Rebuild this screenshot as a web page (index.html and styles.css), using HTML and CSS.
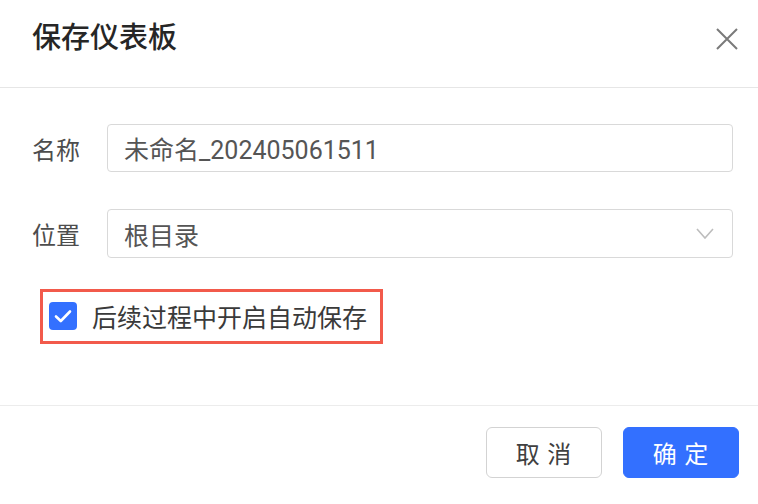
FILE: index.html
```html
<!DOCTYPE html>
<html lang="zh-CN">
<head>
<meta charset="utf-8">
<title>保存仪表板</title>
<link rel="stylesheet" href="styles.css">
</head>
<body>
<div class="dialog">
  <header class="dlg-header">
    <h1 class="dlg-title">保存仪表板</h1>
    <button class="close-btn" aria-label="关闭">
      <svg width="22" height="22" viewBox="0 0 22 22"><path d="M1 1L21 21M21 1L1 21" stroke="#7a7a7a" stroke-width="2" fill="none"/></svg>
    </button>
  </header>
  <main class="dlg-body">
    <div class="form-row">
      <label class="form-label">名称</label>
      <div class="field">未命名_202405061511</div>
    </div>
    <div class="form-row">
      <label class="form-label">位置</label>
      <div class="field select">
        <span>根目录</span>
        <svg class="chevron" width="18" height="11" viewBox="0 0 18 11"><path d="M1 1L9 10L17 1" stroke="#bdbdbd" stroke-width="1.6" fill="none"/></svg>
      </div>
    </div>
    <div class="check-wrap">
      <div class="check-row">
        <span class="checkbox">
          <svg width="18" height="14" viewBox="0 0 18 14"><path d="M2 7.5L6.8 12L16 2.5" stroke="#fff" stroke-width="2.6" fill="none" stroke-linecap="round" stroke-linejoin="round"/></svg>
        </span>
        <span class="check-text">后续过程中开启自动保存</span>
      </div>
    </div>
  </main>
  <footer class="dlg-footer">
    <button class="btn btn-default">取 消</button>
    <button class="btn btn-primary">确 定</button>
  </footer>
</div>
</body>
</html>
```
FILE: styles.css
```css
html, body {
  margin: 0;
  padding: 0;
  background: #ffffff;
}
body {
  font-family: "Noto Sans CJK SC", "Noto Sans", sans-serif;
  width: 758px;
  height: 504px;
  overflow: hidden;
}
.dialog {
  display: flex;
  flex-direction: column;
  height: 504px;
}
.dlg-header {
  height: 88px;
  box-sizing: border-box;
  border-bottom: 1px solid #e6e6e6;
  display: flex;
  align-items: flex-start;
  justify-content: space-between;
  padding: 15px 20px 0 32px;
}
.dlg-title {
  margin: 0;
  font-size: 29px;
  line-height: 40px;
  font-weight: 500;
  color: #262626;
}
.close-btn {
  border: 0;
  background: none;
  padding: 0;
  margin-top: 13px;
  width: 22px;
  height: 22px;
  display: flex;
}
.dlg-body {
  height: 318px;
  box-sizing: border-box;
  padding: 36px 25px 0 32px;
  border-bottom: 1px solid #ececec;
}
.form-row {
  display: flex;
  align-items: center;
  margin-bottom: 37px;
}
.form-label {
  width: 75px;
  flex: none;
  font-size: 24px;
  color: #4d4d4d;
}
.field {
  flex: 1;
  height: 48px;
  box-sizing: border-box;
  border: 1px solid #d9d9d9;
  border-radius: 4px;
  padding: 0 16px;
  display: flex;
  align-items: center;
  font-family: "Roboto", "Noto Sans CJK SC", sans-serif;
  font-size: 25px;
  color: #555555;
}
.select {
  justify-content: space-between;
  height: 49px;
}
.chevron {
  margin-right: 2px;
}
.check-wrap {
  margin-top: -6px;
  margin-left: 8px;
  display: flex;
}
.check-row {
  display: flex;
  align-items: center;
  border: 3px solid #f25a4b;
  padding: 8px 13px 9px 6px;
  gap: 15px;
}
.checkbox {
  width: 28px;
  height: 28px;
  border-radius: 4px;
  background: #3370ff;
  display: flex;
  align-items: center;
  justify-content: center;
}
.check-text {
  font-size: 25px;
  color: #3a3a3a;
  line-height: 32px;
}
.dlg-footer {
  display: flex;
  justify-content: flex-end;
  gap: 21px;
  padding: 21px 19px 0 0;
}
.btn {
  width: 116px;
  height: 51px;
  border-radius: 6px;
  font-family: "Noto Sans CJK SC", sans-serif;
  font-size: 24px;
  letter-spacing: 1px;
  cursor: pointer;
}
.btn-default {
  background: #ffffff;
  border: 1px solid #d3d3d3;
  color: #404040;
}
.btn-primary {
  background: #3370ff;
  border: 1px solid #3370ff;
  color: #ffffff;
}
```
